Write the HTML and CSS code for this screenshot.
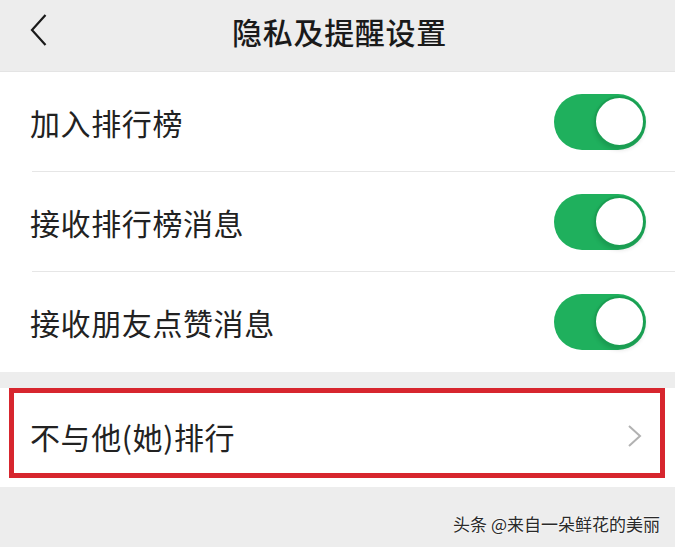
FILE: index.html
```html
<!DOCTYPE html>
<html lang="zh">
<head>
<meta charset="utf-8">
<link rel="stylesheet" href="styles.css">
</head>
<body>
<div class="page">
  <header class="topbar">
    <div class="back">
      <svg width="17" height="32" viewBox="0 0 17 32"><path d="M15.5 1 L2 16 L15.5 31" fill="none" stroke="#1a1a1a" stroke-width="2.2"/></svg>
    </div>
    <div class="title">隐私及提醒设置</div>
    <div></div>
  </header>
  <section class="group">
    <div class="row"><span class="label">加入排行榜</span><span class="switch"><span class="knob"></span></span></div>
    <div class="row"><span class="label">接收排行榜消息</span><span class="switch"><span class="knob"></span></span></div>
    <div class="row last"><span class="label">接收朋友点赞消息</span><span class="switch"><span class="knob"></span></span></div>
  </section>
  <section class="group group2">
    <div class="row single">
      <span class="label">不与他(她)排行</span>
      <svg class="arrow" width="16" height="24" viewBox="0 0 16 24"><path d="M2 2 L13 12 L2 22" fill="none" stroke="#b2b2b2" stroke-width="2"/></svg>
      <div class="highlight"></div>
    </div>
  </section>
  <footer class="footer"><span class="mark">头条 @来自一朵鲜花的美丽</span></footer>
</div>
</body>
</html>
```
FILE: styles.css
```css
html, body { margin: 0; padding: 0; }
body {
  background: #ededed;
  font-family: "Noto Sans CJK SC", "Noto Sans", sans-serif;
  color: #1a1a1a;
}
.page { width: 675px; height: 547px; overflow: hidden; }
.topbar {
  height: 72px;
  display: grid;
  grid-template-columns: 1fr auto 1fr;
  align-items: center;
  background: #ededed;
  border-bottom: 1px solid #e4e4e4;
  box-sizing: border-box;
}
.back { padding-left: 30px; display: flex; align-items: center; padding-bottom: 12px; }
.title { font-size: 30px; font-weight: 500; padding-bottom: 10px; letter-spacing: 0.7px; color: #1a1a1a; padding-left: 4px; }
.group { background: #fff; }
.row {
  height: 100px;
  display: flex;
  align-items: center;
  justify-content: space-between;
  margin-left: 32px;
  padding-right: 29px;
  border-bottom: 1px solid #e6e6e6;
  box-sizing: border-box;
}
.row.last { border-bottom: none; }
.label { font-size: 30px; letter-spacing: 0.6px; margin-left: -2px; color: #222; }
.switch {
  width: 92px; height: 56px; border-radius: 28px;
  background: #1fb05d;
  position: relative;
  box-sizing: border-box;
}
.knob {
  position: absolute; right: 1px; top: 2px;
  width: 51px; height: 51px; border-radius: 50%;
  background: #fff;
  box-sizing: border-box;
  border: 2px solid #1a9e52;
  box-shadow: 0 3px 4px rgba(0,0,0,0.12);
}
.group2 { margin-top: 16px; }
.row.single { height: 99px; border-bottom: none; position: relative; padding-right: 32px; align-items: center; padding-bottom: 4px; }
.arrow { display: block; }
.highlight {
  position: absolute;
  left: -23px; top: 0; width: 656px; height: 90px;
  border: 5px solid #d7262e;
  box-sizing: border-box;
  pointer-events: none;
}
.footer {
  height: 60px;
  display: flex;
  justify-content: flex-end;
  align-items: center;
  padding-right: 15px;
}
.mark {
  font-size: 17px;
  color: #2a2a2a;
  text-shadow: 0 0 2px #fff, 0 0 2px #fff;
  padding-top: 12px;
}
```
